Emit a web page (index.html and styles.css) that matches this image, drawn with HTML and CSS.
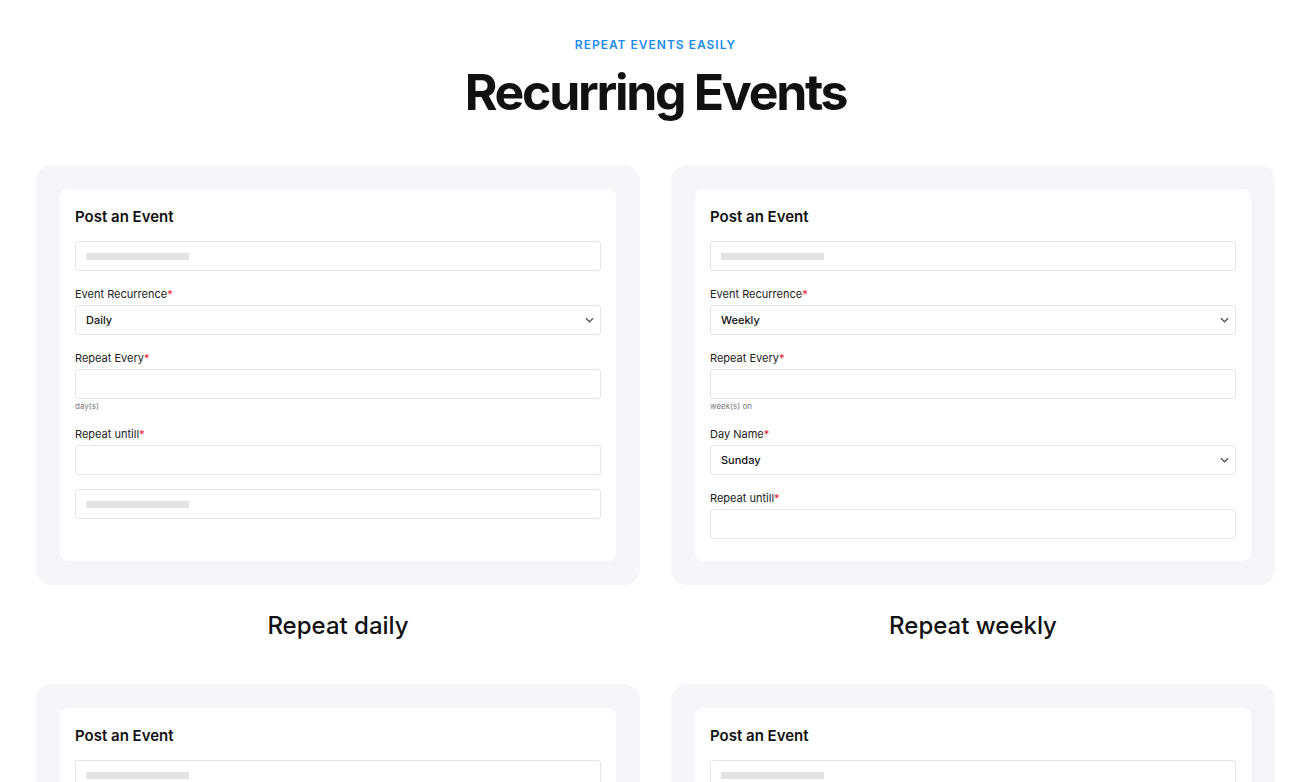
FILE: index.html
```html
<!DOCTYPE html>
<html lang="en">

<head>
  <meta charset="UTF-8">
  <meta name="viewport" content="width=device-width, initial-scale=1.0">
  <title>Recurring Events</title>
  <link rel="stylesheet" href="styles.css">
</head>

<body>

  <section class="recurring">
    <div class="section-head">
      <p class="eyebrow">REPEAT EVENTS EASILY</p>
      <h1 class="section-title">Recurring Events</h1>
    </div>

    <div class="demo-grid">

      <!-- 毎日 -->
      <div class="demo">
        <div class="demo-card">
          <div class="form-panel">
            <h3 class="form-title">Post an Event</h3>
            <div class="field">
              <div class="input"><span class="ph"></span></div>
            </div>
            <div class="field">
              <label class="label">Event Recurrence<span class="req">*</span></label>
              <div class="input select">Daily
                <svg class="chev" viewBox="0 0 10 6" width="9" height="6"><path d="M1 1l4 4 4-4" fill="none" stroke="#555" stroke-width="1.4"/></svg>
              </div>
            </div>
            <div class="field">
              <label class="label">Repeat Every<span class="req">*</span></label>
              <div class="input"></div>
              <div class="hint">day(s)</div>
            </div>
            <div class="field">
              <label class="label">Repeat untill<span class="req">*</span></label>
              <div class="input"></div>
            </div>
            <div class="field">
              <div class="input"><span class="ph"></span></div>
            </div>
          </div>
        </div>
        <h2 class="demo-title">Repeat daily</h2>
      </div>

      <!-- 毎週 -->
      <div class="demo">
        <div class="demo-card">
          <div class="form-panel">
            <h3 class="form-title">Post an Event</h3>
            <div class="field">
              <div class="input"><span class="ph"></span></div>
            </div>
            <div class="field">
              <label class="label">Event Recurrence<span class="req">*</span></label>
              <div class="input select">Weekly
                <svg class="chev" viewBox="0 0 10 6" width="9" height="6"><path d="M1 1l4 4 4-4" fill="none" stroke="#555" stroke-width="1.4"/></svg>
              </div>
            </div>
            <div class="field">
              <label class="label">Repeat Every<span class="req">*</span></label>
              <div class="input"></div>
              <div class="hint">week(s) on</div>
            </div>
            <div class="field">
              <label class="label">Day Name<span class="req">*</span></label>
              <div class="input select">Sunday
                <svg class="chev" viewBox="0 0 10 6" width="9" height="6"><path d="M1 1l4 4 4-4" fill="none" stroke="#555" stroke-width="1.4"/></svg>
              </div>
            </div>
            <div class="field">
              <label class="label">Repeat untill<span class="req">*</span></label>
              <div class="input"></div>
            </div>
          </div>
        </div>
        <h2 class="demo-title">Repeat weekly</h2>
      </div>

      <!-- 毎月 -->
      <div class="demo">
        <div class="demo-card">
          <div class="form-panel">
            <h3 class="form-title">Post an Event</h3>
            <div class="field">
              <div class="input"><span class="ph"></span></div>
            </div>
            <div class="field">
              <label class="label">Event Recurrence<span class="req">*</span></label>
              <div class="input select">Monthly
                <svg class="chev" viewBox="0 0 10 6" width="9" height="6"><path d="M1 1l4 4 4-4" fill="none" stroke="#555" stroke-width="1.4"/></svg>
              </div>
            </div>
            <div class="field">
              <label class="label">Repeat Every<span class="req">*</span></label>
              <div class="input"></div>
              <div class="hint">month(s)</div>
            </div>
            <div class="field">
              <label class="label">Repeat untill<span class="req">*</span></label>
              <div class="input"></div>
            </div>
          </div>
        </div>
        <h2 class="demo-title">Repeat monthly</h2>
      </div>

      <!-- 毎年 -->
      <div class="demo">
        <div class="demo-card">
          <div class="form-panel">
            <h3 class="form-title">Post an Event</h3>
            <div class="field">
              <div class="input"><span class="ph"></span></div>
            </div>
            <div class="field">
              <label class="label">Event Recurrence<span class="req">*</span></label>
              <div class="input select">Yearly
                <svg class="chev" viewBox="0 0 10 6" width="9" height="6"><path d="M1 1l4 4 4-4" fill="none" stroke="#555" stroke-width="1.4"/></svg>
              </div>
            </div>
            <div class="field">
              <label class="label">Repeat Every<span class="req">*</span></label>
              <div class="input"></div>
              <div class="hint">year(s)</div>
            </div>
            <div class="field">
              <label class="label">Repeat untill<span class="req">*</span></label>
              <div class="input"></div>
            </div>
          </div>
        </div>
        <h2 class="demo-title">Repeat yearly</h2>
      </div>

    </div>
  </section>

</body>
</html>
```

FILE: styles.css
```css
* {
  box-sizing: border-box;
}

body {
  margin: 0;
  background: #fff;
  color: #111;
  font-family: Inter, "Noto Sans", sans-serif;
}

.recurring {
  width: 1239px;
  margin-left: 36px;
  padding-top: 38px;
}

.section-head {
  text-align: center;
}

.eyebrow {
  margin: 0;
  font-size: 12px;
  line-height: 14px;
  font-weight: 600;
  letter-spacing: 1px;
  color: #1a8cf0;
}

.section-title {
  margin: 10px 0 0;
  font-size: 50px;
  line-height: 60px;
  font-weight: 700;
  letter-spacing: -2.3px;
  color: #111;
}

.demo-grid {
  display: grid;
  grid-template-columns: 1fr 1fr;
  column-gap: 31px;
  margin-top: 43px;
}

.demo {
  display: flex;
  flex-direction: column;
}

.demo-card {
  flex: 1;
  display: flex;
  background: #f6f6fa;
  border-radius: 16px;
  padding: 24px;
}

.form-panel {
  flex: 1;
  background: #fff;
  border-radius: 8px;
  padding: 18px 15px 22px;
}

.form-title {
  margin: 0 0 14px;
  font-size: 15px;
  line-height: 20px;
  font-weight: 600;
  color: #111;
}

.field {
  display: flex;
  flex-direction: column;
  margin-bottom: 14px;
}

.field:last-child {
  margin-bottom: 0;
}

.label {
  font-size: 11px;
  line-height: 16px;
  color: #222;
  margin: 1px 0 3px;
}

.req {
  color: #e8202a;
}

.input {
  height: 30px;
  border: 1px solid #e4e4e7;
  border-radius: 3px;
  padding: 0 10px;
  display: flex;
  align-items: center;
  font-size: 11px;
  font-weight: 500;
  color: #111;
}

.ph {
  width: 103px;
  height: 7px;
  background: #e3e3e3;
}

.select {
  justify-content: space-between;
}

.chev {
  margin-right: -4px;
}

.hint {
  margin-top: 2px;
  font-size: 8px;
  line-height: 10px;
  color: #777;
}

.demo-title {
  margin: 26px 0 43px;
  text-align: center;
  font-size: 24px;
  line-height: 30px;
  font-weight: 500;
  color: #111;
}
```
